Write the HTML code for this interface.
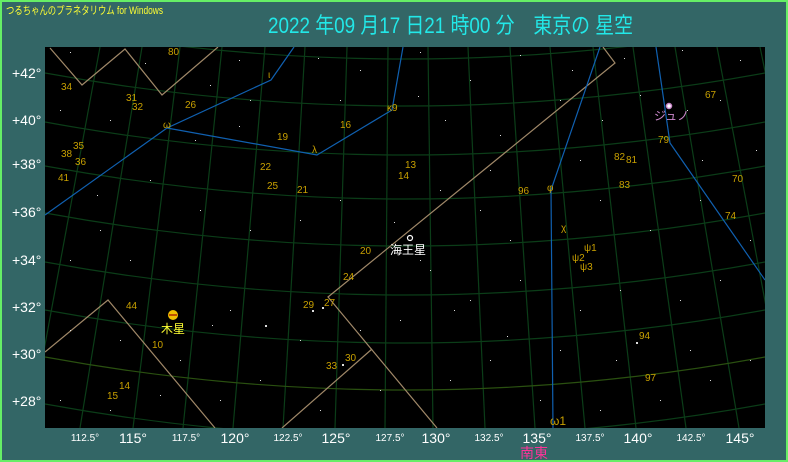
<!DOCTYPE html>
<html><head><meta charset="utf-8"><style>
html,body{margin:0;padding:0;}
body{width:788px;height:462px;overflow:hidden;background:#336666;font-family:"Liberation Sans","Noto Sans CJK JP",sans-serif;}
</style></head><body>
<svg width="788" height="462" viewBox="0 0 788 462" xmlns="http://www.w3.org/2000/svg" style="display:block">
<defs><clipPath id="c"><rect x="45" y="47" width="720" height="381"/></clipPath></defs>
<rect x="0" y="0" width="788" height="462" fill="#336666"/>
<rect x="1" y="1" width="786" height="460" fill="none" stroke="#66ee66" stroke-width="2"/>
<text x="6" y="14" font-size="11" fill="#ffff33" textLength="157" lengthAdjust="spacingAndGlyphs" font-family="Liberation Sans,Noto Sans CJK JP,sans-serif">つるちゃんのプラネタリウム for Windows</text>
<text x="268" y="33" font-size="22" fill="#22e8e8" textLength="365" lengthAdjust="spacingAndGlyphs" font-family="Liberation Sans,Noto Sans CJK JP,sans-serif">2022 年09 月17 日21 時00 分　東京の 星空</text>
<rect x="45" y="47" width="720" height="381" fill="#000"/>
<g clip-path="url(#c)">
<g fill="none" stroke="#0b3d18" stroke-width="1.2">
<path d="M30,426 L100,47"/><path d="M80,428 L142,47"/><path d="M133,428 L180,47"/><path d="M183,428 L222,47"/><path d="M233,428 L265,47"/><path d="M283,428 L305,47"/><path d="M335,428 L347,47"/><path d="M385,428 L388,47"/><path d="M433,428 L428,47"/><path d="M485,428 L468,47"/><path d="M535,428 L510,47"/><path d="M585,428 L550,47"/><path d="M636,428 L593,47"/><path d="M686,428 L633,47"/><path d="M739,428 L675,47"/><path d="M789,428 L717,47"/><path d="M839,428 L760,47"/>
<path d="M45,26 Q405,92 765,26"/><path d="M45,73 Q405,139 765,73"/><path d="M45,122 Q405,188 765,122"/><path d="M45,166 Q405,232 765,166"/><path d="M45,213 Q405,279 765,213"/><path d="M45,262 Q405,328 765,262"/><path d="M45,310 Q405,376 765,310"/><path d="M45,357 Q405,423 765,357" stroke="#2a5010"/><path d="M45,404 Q405,470 765,404"/>
</g>
<g fill="none" stroke="#a08868" stroke-width="1.2">
<path d="M50,48 L82,85 L125,49 L162,95 L218,47"/>
<path d="M603,47 L615,63 L328,297 L437,428"/>
<path d="M372,349 L282,428"/>
<path d="M45,352 L108,300 L215,428"/>
</g>
<g fill="none" stroke="#1060b0" stroke-width="1.2">
<path d="M294,47 L271,80 L167,128 L45,215"/>
<path d="M167,128 L317,155 L392,110 L403,47"/>
<path d="M600,47 L551,190 L553,428"/>
<path d="M656,47 L670,143 L765,280"/>
</g>
<g fill="#ddd">
<rect x="70" y="52" width="1" height="1"/><rect x="145" y="63" width="1" height="1"/><rect x="210" y="85" width="1" height="1"/><rect x="239" y="60" width="1" height="1"/><rect x="318" y="58" width="1" height="1"/><rect x="360" y="70" width="1" height="1"/><rect x="420" y="52" width="1" height="1"/><rect x="470" y="80" width="1" height="1"/><rect x="520" y="55" width="1" height="1"/><rect x="572" y="70" width="1" height="1"/><rect x="624" y="58" width="1" height="1"/><rect x="682" y="50" width="1" height="1"/><rect x="740" y="60" width="1" height="1"/><rect x="720" y="100" width="1" height="1"/><rect x="687" y="110" width="1" height="1"/><rect x="640" y="95" width="1" height="1"/><rect x="602" y="120" width="1" height="1"/><rect x="560" y="100" width="1" height="1"/><rect x="500" y="135" width="1" height="1"/><rect x="445" y="120" width="1" height="1"/><rect x="418" y="96" width="1" height="1"/><rect x="340" y="100" width="1" height="1"/><rect x="239" y="126" width="1" height="1"/><rect x="195" y="140" width="1" height="1"/><rect x="110" y="120" width="1" height="1"/><rect x="60" y="110" width="1" height="1"/><rect x="97" y="195" width="1" height="1"/><rect x="150" y="180" width="1" height="1"/><rect x="200" y="210" width="1" height="1"/><rect x="250" y="230" width="1" height="1"/><rect x="300" y="220" width="1" height="1"/><rect x="340" y="200" width="1" height="1"/><rect x="440" y="190" width="1" height="1"/><rect x="480" y="210" width="1" height="1"/><rect x="510" y="240" width="1" height="1"/><rect x="600" y="200" width="1" height="1"/><rect x="650" y="230" width="1" height="1"/><rect x="700" y="200" width="1" height="1"/><rect x="750" y="240" width="1" height="1"/><rect x="720" y="280" width="1" height="1"/><rect x="680" y="300" width="1" height="1"/><rect x="620" y="290" width="1" height="1"/><rect x="580" y="310" width="1" height="1"/><rect x="520" y="280" width="1" height="1"/><rect x="470" y="300" width="1" height="1"/><rect x="430" y="270" width="1" height="1"/><rect x="400" y="320" width="1" height="1"/><rect x="360" y="330" width="1" height="1"/><rect x="300" y="340" width="1" height="1"/><rect x="265" y="325" width="1" height="1"/><rect x="230" y="310" width="1" height="1"/><rect x="212" y="325" width="1" height="1"/><rect x="180" y="360" width="1" height="1"/><rect x="120" y="340" width="1" height="1"/><rect x="70" y="330" width="1" height="1"/><rect x="60" y="400" width="1" height="1"/><rect x="110" y="410" width="1" height="1"/><rect x="160" y="395" width="1" height="1"/><rect x="220" y="400" width="1" height="1"/><rect x="260" y="380" width="1" height="1"/><rect x="320" y="410" width="1" height="1"/><rect x="380" y="390" width="1" height="1"/><rect x="450" y="380" width="1" height="1"/><rect x="490" y="360" width="1" height="1"/><rect x="540" y="400" width="1" height="1"/><rect x="600" y="410" width="1" height="1"/><rect x="660" y="400" width="1" height="1"/><rect x="710" y="380" width="1" height="1"/><rect x="750" y="360" width="1" height="1"/><rect x="690" y="350" width="1" height="1"/><rect x="616" y="360" width="1" height="1"/><rect x="560" y="350" width="1" height="1"/><rect x="507" y="336" width="1" height="1"/><rect x="454" y="310" width="1" height="1"/><rect x="756" y="150" width="1" height="1"/><rect x="702" y="160" width="1" height="1"/><rect x="580" y="160" width="1" height="1"/><rect x="490" y="170" width="1" height="1"/><rect x="250" y="100" width="1" height="1"/><rect x="100" y="230" width="1" height="1"/><rect x="70" y="260" width="1" height="1"/><rect x="130" y="260" width="1" height="1"/><rect x="265" y="325" width="2" height="2"/><rect x="312" y="310" width="2" height="2"/><rect x="322" y="307" width="2" height="2"/><rect x="342" y="364" width="2" height="2"/><rect x="636" y="342" width="2" height="2"/><rect x="394" y="222" width="1" height="1"/><rect x="420" y="260" width="1" height="1"/>
</g>
</g>
<g font-size="10" fill="#c8a000" font-family="Liberation Sans,sans-serif">
<text x="168" y="55">80</text><text x="61" y="90">34</text><text x="126" y="101">31</text><text x="132" y="110">32</text><text x="185" y="108">26</text><text x="268" y="78">ι</text><text x="277" y="140">19</text><text x="340" y="128">16</text><text x="387" y="111">κ9</text><text x="312" y="153">λ</text><text x="163" y="128">ω</text><text x="73" y="149">35</text><text x="61" y="157">38</text><text x="75" y="165">36</text><text x="58" y="181">41</text><text x="260" y="170">22</text><text x="267" y="189">25</text><text x="297" y="193">21</text><text x="405" y="168">13</text><text x="398" y="179">14</text><text x="360" y="254">20</text><text x="343" y="280">24</text><text x="303" y="308">29</text><text x="324" y="306">27</text><text x="126" y="309">44</text><text x="152" y="348">10</text><text x="326" y="369">33</text><text x="345" y="361">30</text><text x="119" y="389">14</text><text x="107" y="399">15</text><text x="518" y="194">96</text><text x="547" y="191">φ</text><text x="561" y="231">χ</text><text x="584" y="251">ψ1</text><text x="572" y="261">ψ2</text><text x="580" y="270">ψ3</text><text x="614" y="160">82</text><text x="626" y="163">81</text><text x="619" y="188">83</text><text x="658" y="143">79</text><text x="705" y="98">67</text><text x="732" y="182">70</text><text x="725" y="219">74</text><text x="639" y="339">94</text><text x="645" y="381">97</text><text x="550" y="425" font-size="12">ω1</text>
</g>
<circle cx="410" cy="238" r="2.5" fill="none" stroke="#fff" stroke-width="1.2"/>
<text x="390" y="254" font-size="12" fill="#fff">海王星</text>
<circle cx="173" cy="315" r="5" fill="#f0c000"/><rect x="169" y="314" width="8" height="2" fill="#c05000"/>
<text x="161" y="333" font-size="12" fill="#ffff33">木星</text>
<circle cx="669" cy="106" r="2.5" fill="#fff" stroke="#cc88cc" stroke-width="1.5"/>
<text x="654" y="120" font-size="12" fill="#cc88cc">ジュノ</text>
<g font-size="14" fill="#fff" font-family="Liberation Sans,sans-serif">
<text x="12" y="78">+42°</text><text x="12" y="125">+40°</text><text x="12" y="169">+38°</text><text x="12" y="217">+36°</text><text x="12" y="265">+34°</text><text x="12" y="312">+32°</text><text x="12" y="359">+30°</text><text x="12" y="406">+28°</text>
</g>
<g font-size="10" fill="#fff" font-family="Liberation Sans,sans-serif" text-anchor="middle">
<text x="85" y="441">112.5°</text><text x="186" y="441">117.5°</text><text x="288" y="441">122.5°</text><text x="390" y="441">127.5°</text><text x="489" y="441">132.5°</text><text x="590" y="441">137.5°</text><text x="691" y="441">142.5°</text>
</g>
<g font-size="14" fill="#fff" font-family="Liberation Sans,sans-serif" text-anchor="middle">
<text x="133" y="443">115°</text><text x="235" y="443">120°</text><text x="336" y="443">125°</text><text x="436" y="443">130°</text><text x="537" y="443">135°</text><text x="638" y="443">140°</text><text x="740" y="443">145°</text>
</g>
<text x="520" y="458" font-size="14" fill="#ff3399">南東</text>
</svg>
</body></html>
